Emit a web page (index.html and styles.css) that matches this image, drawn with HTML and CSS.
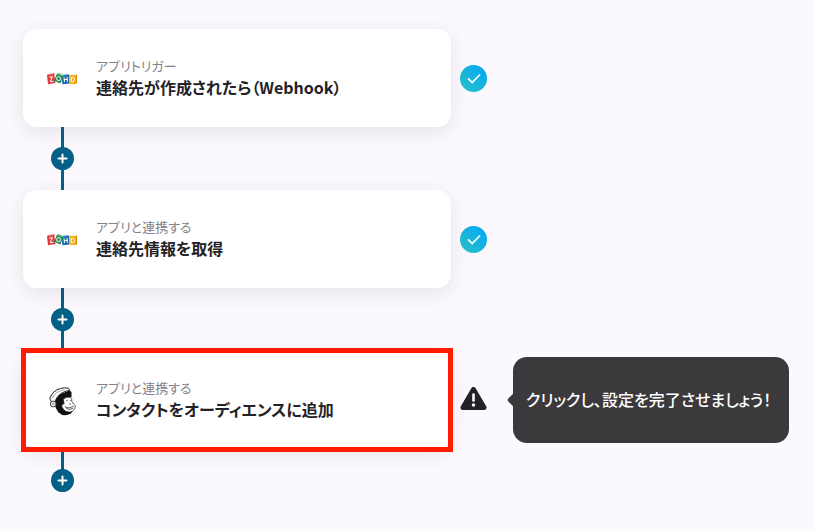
FILE: index.html
```html
<!DOCTYPE html>
<html lang="ja">
<head>
<meta charset="utf-8">
<meta name="viewport" content="width=device-width, initial-scale=1">
<title>連絡先が作成されたら（Webhook）</title>
<link rel="stylesheet" href="styles.css">
</head>
<body>
<svg class="defs" aria-hidden="true">
  <defs>
    <linearGradient id="done" x1="0" y1="1" x2="1" y2="0">
      <stop offset="0" stop-color="#2bc4c4"/>
      <stop offset="1" stop-color="#00a4fa"/>
    </linearGradient>
    <symbol id="zoho" viewBox="0 0 30 12">
      <path fill="#dc3a38" d="M0 2 7.300 .7 8.300 10 1 11.300z"/>
      <path fill="#ef6a5f" d="M0 2 1.500 .9 8 0 7.300 .9z"/>
      <path fill="#1c69b3" d="M14.800 2.400 22 1.700 22.500 10.500 15.300 11.200z"/>
      <path fill="#63a8dc" d="M14.800 2.400 15.800 1.500 22.500 .9 22 1.700z"/>
      <path fill="#218a52" d="M10 .7 16.300 3.400 13.300 10.500 7 7.700z"/>
      <path fill="#58b678" d="M10 .7 11.600 0 17 2.400 16.300 3.400z"/>
      <path fill="#f4ad17" d="M22.400 1.900H29v9.200h-6.600z"/>
      <path fill="#dc8d12" d="M29 1.900 30 1.100V10.300l-1 .8z"/>
      <g fill="none" stroke="#fff" stroke-width="1">
        <path d="M2.200 4.200 5.400 3.600 3.200 8.700 6.500 8.100"/>
        <circle cx="11.600" cy="5.700" r="2"/>
        <path d="M17 4.200 17.500 9M20 3.900 20.500 8.700M17.200 6.600 20.300 6.300"/>
        <path d="M24.200 4.300h1.300q2 .2 2 2.200t-2 2.300h-1.300z"/>
      </g>
    </symbol>
    <symbol id="check" viewBox="0 0 27 27">
      <circle cx="13.500" cy="13.500" r="13.500" fill="url(#done)"/>
      <path d="M8 13.300 12.200 17.500 20 9.500" fill="none" stroke="#fff" stroke-width="1.700"/>
    </symbol>
    <symbol id="plus" viewBox="0 0 23 23">
      <path d="M11.500 7.500v8M7.500 11.500h8" fill="none" stroke="#fff" stroke-width="2" stroke-linecap="round"/>
    </symbol>
  </defs>
</svg>

<main class="flow">
  <section class="step">
    <button class="card" type="button">
      <svg class="logo" role="img" aria-label="Zoho"><use href="#zoho"/></svg>
      <span class="text"><span class="kind">アプリトリガー</span><span class="title">連絡先が作成されたら（Webhook）</span></span>
    </button>
    <svg class="status" aria-hidden="true"><use href="#check"/></svg>
  </section>

  <div class="link">
    <button class="add" type="button" aria-label="追加"><svg><use href="#plus"/></svg></button>
  </div>

  <section class="step">
    <button class="card" type="button">
      <svg class="logo" role="img" aria-label="Zoho"><use href="#zoho"/></svg>
      <span class="text"><span class="kind">アプリと連携する</span><span class="title">連絡先情報を取得</span></span>
    </button>
    <svg class="status" aria-hidden="true"><use href="#check"/></svg>
  </section>

  <div class="link">
    <button class="add" type="button" aria-label="追加"><svg><use href="#plus"/></svg></button>
  </div>

  <section class="step">
    <button class="card marked" type="button">
      <svg class="logo tall" viewBox="0 0 30 30" role="img" aria-label="Mailchimp">
        <path fill="#111" d="M8 15 12 8.500 22.500 4.500 24.500 6 24.500 11 18 13 17 19 26 24.500 24 27.500Q17 31.500 11.500 26.500L8.500 21.500z"/>
        <path fill="#fff" stroke="#222" stroke-width="1" d="M4.200 15.500 2.800 12.500Q5.500 4.500 13.500 2.500 17 1.200 21.500 2.300L22.800 4.300Q12 5.500 7.800 15.500z"/>
        <path fill="none" stroke="#777" stroke-width=".6" d="M4.800 12.800Q8.500 5 17.500 3.600"/>
        <path fill="#fff" stroke="#222" stroke-width=".7" d="M16.300 13.300Q19 10.500 23.500 11.300 25.300 12.800 24.800 15.500L27.200 18.500 28.300 19.800Q28.300 24.500 23.500 26 18 26.300 16 22.500 14 20.800 15.300 18.300L17.200 17.800z"/>
        <path fill="none" stroke="#333" stroke-width=".8" d="M19.300 14.700 20.700 14.300M23 14.400 23.900 14.700M22.300 17.900 24 18.200M17.800 20.900Q22 23.300 26.800 20.300M19.300 22.500Q22.500 24.500 26 22.300"/>
        <circle cx="6.200" cy="18" r="2.900" fill="#e4e4e4" stroke="#333" stroke-width=".9"/>
        <circle cx="6.200" cy="18" r="1.100" fill="#aaa"/>
      </svg>
      <span class="text"><span class="kind">アプリと連携する</span><span class="title">コンタクトをオーディエンスに追加</span></span>
    </button>
    <svg class="status" viewBox="0 0 27 27" aria-hidden="true">
      <path d="M13.500 2.500 24 20.500H3z" fill="#242226" stroke="#242226" stroke-width="5" stroke-linejoin="round"/>
      <path d="M13.500 7.500v6" stroke="#fff" stroke-width="2.600" stroke-linecap="round"/>
      <circle cx="13.500" cy="18" r="1.700" fill="#fff"/>
    </svg>
    <p class="tip" role="status">クリックし、設定を完了させましょう！</p>
  </section>

  <div class="link last">
    <button class="add" type="button" aria-label="追加"><svg><use href="#plus"/></svg></button>
  </div>
</main>
</body>
</html>
```
FILE: styles.css
```css
* { box-sizing: border-box; }

body {
  margin: 0;
  background: #fbf9fd;
  color: #242226;
  font-family: "Noto Sans CJK JP", sans-serif;
  font-feature-settings: "palt";
}

.defs { position: absolute; width: 0; height: 0; }

.flow { padding: 29px 24px 0 23px; }

.step {
  display: flex;
  align-items: center;
}

.card {
  position: relative;
  display: flex;
  align-items: center;
  gap: 19px;
  flex: 0 1 428px;
  min-height: 98px;
  padding: 22px 24px 20px;
  border: 0;
  border-radius: 14px;
  background: #fff;
  box-shadow: 0 5px 20px rgb(40 35 55 / 10%);
  color: inherit;
  font: inherit;
  font-feature-settings: inherit;
  text-align: left;
  cursor: pointer;
}

.marked::after {
  content: "";
  position: absolute;
  inset: -3px -2px;
  border: 5px solid #ff1a00;
}

.logo { flex: none; width: 30px; height: 12px; }
.logo.tall { height: 30px; }

.text {
  display: grid;
  padding-bottom: 4px;
}

.kind {
  color: #848287;
  font-size: 13px;
  line-height: 20px;
}

.title {
  font-size: 16px;
  font-weight: 700;
  line-height: 22px;
}

.status {
  flex: none;
  width: 27px;
  height: 27px;
  margin-left: 9px;
}

.tip {
  position: relative;
  margin: 0 0 0 26px;
  padding: 30px 18px 32px 13px;
  border-radius: 14px;
  background: #3b393c;
  color: #fff;
  font-size: 16px;
  font-weight: 500;
  line-height: 24px;
}

.tip::before {
  content: "";
  position: absolute;
  top: 50%;
  left: -4px;
  width: 10px;
  height: 10px;
  margin-top: -5px;
  background: #3b393c;
  border-radius: 2px;
  transform: rotate(45deg);
}

.link {
  display: flex;
  align-items: center;
  justify-content: center;
  width: 23px;
  height: 63px;
  margin-left: 28px;
  background: linear-gradient(#056087, #056087) center / 3px 100% no-repeat;
}

.link.last {
  align-items: flex-end;
  height: 43px;
  background-size: 3px 80%;
  background-position: top;
}

.add {
  display: grid;
  width: 23px;
  height: 23px;
  padding: 0;
  border: 0;
  border-radius: 50%;
  background: #056087;
  cursor: pointer;
}

.add svg { width: 23px; height: 23px; }
```
